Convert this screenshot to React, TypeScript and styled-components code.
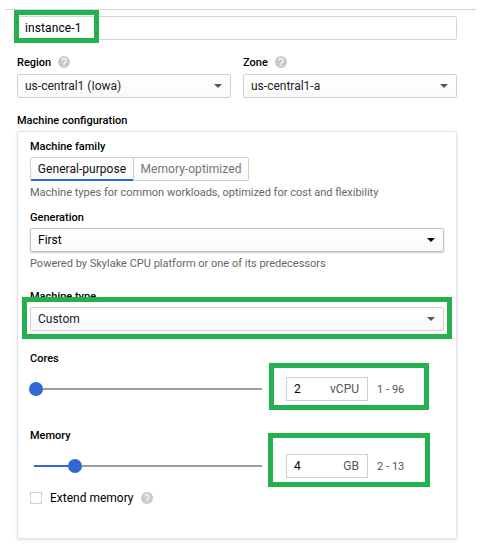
import React from 'react';
import styled, { createGlobalStyle } from 'styled-components';

const GlobalStyle = createGlobalStyle`
  * { box-sizing: border-box; }
  body {
    margin: 0;
    background: #fff;
    color: #000;
    font-family: Roboto, "Liberation Sans", sans-serif;
    font-size: 12px;
  }
  input, button { font: inherit; color: inherit; }
`;

const Page = styled.main`
  width: 481px;
  height: 553px;
  padding: 9px 5px 0;
  overflow: hidden;
`;

const Form = styled.form`
  display: flex;
  flex-direction: column;
  border-top: 1px solid #d4d4d4;
  padding: 6px 19px 0 12px;
`;

const Highlighted = styled.div`
  position: relative;
`;

const Highlight = styled.div<{ $top: number; $left: number; $width: number; $height: number }>`
  position: absolute;
  z-index: 2;
  top: ${p => p.$top}px;
  left: ${p => p.$left}px;
  width: ${p => p.$width}px;
  height: ${p => p.$height}px;
  border: 5px solid #22b14c;
  pointer-events: none;
`;

const NameInput = styled.input`
  display: block;
  width: 100%;
  height: 24px;
  padding: 0 7px;
  border: 1px solid #d4d4d4;
  border-radius: 2px;
  letter-spacing: 0.1px;
  outline: 0;
`;

const LocationRow = styled.div`
  display: grid;
  grid-template-columns: 214px 214px;
  gap: 12px;
  margin-top: 14px;
`;

const Label = styled.div<{ $top?: number; $gap?: number }>`
  display: flex;
  align-items: center;
  gap: 7px;
  height: 16px;
  margin: ${p => p.$top ?? 0}px 0 ${p => p.$gap ?? 4}px;
  font-size: 11px;
  font-weight: 500;
  line-height: 16px;
`;

const LabelText = styled.span`
  padding-top: 2px;
`;

const SelectBox = styled.div<{ $active?: boolean }>`
  display: flex;
  align-items: center;
  justify-content: space-between;
  height: 24px;
  padding: 0 8px 0 7px;
  border: 1px solid ${p => (p.$active ? '#c0c0c0' : '#d0d0d0')};
  border-radius: 2px;
  background: linear-gradient(#fff, #f9f9f9);
  box-shadow: ${p => (p.$active ? '0 1px 2px rgba(0,0,0,.2)' : 'none')};
  color: ${p => (p.$active ? '#000' : '#222')};
  line-height: 16px;
`;

const Arrow = styled.svg<{ $dark?: boolean }>`
  width: 8px;
  height: 4px;
  fill: ${p => (p.$dark ? '#000' : '#555')};
`;

const HelpSvg = styled.svg`
  width: 12px;
  height: 12px;
  flex: none;
`;

const Card = styled.section`
  height: 408px;
  padding: 6px 12px 0;
  border: 1px solid #e5e5e5;
  border-radius: 2px;
  box-shadow: 0 1px 3px rgba(0, 0, 0, 0.12);
`;

const Segments = styled.div`
  display: flex;
  height: 24px;
`;

const Segment = styled.button<{ $selected?: boolean }>`
  width: ${p => (p.$selected ? 104 : 116)}px;
  height: 24px;
  margin: 0 0 0 ${p => (p.$selected ? 0 : -1)}px;
  padding: 0 0 ${p => (p.$selected ? 0 : 1)}px;
  border: 1px solid #d0d0d0;
  border-bottom: ${p => (p.$selected ? '2px solid #3367d6' : '1px solid #d0d0d0')};
  border-radius: ${p => (p.$selected ? '2px 0 0 2px' : '0 2px 2px 0')};
  background: linear-gradient(#fff, #f9f9f9);
  color: ${p => (p.$selected ? '#111' : '#757575')};
  line-height: 16px;
  letter-spacing: 0.04px;
  white-space: nowrap;
`;

const Hint = styled.p`
  height: 16px;
  margin: 3px 0 0;
  padding-top: 1px;
  color: #666;
  font-size: 11px;
  line-height: 16px;
`;

const SliderRow = styled.div`
  position: relative;
  display: flex;
  align-items: center;
  height: 24px;
`;

const Track = styled.div`
  position: relative;
  width: 228px;
  height: 2px;
  margin: 0 24px 0 4px;
  background: #9e9e9e;
`;

const Fill = styled.div<{ $value: number }>`
  width: ${p => p.$value}px;
  height: 2px;
  background: #3367d6;
`;

const Thumb = styled.div<{ $value: number }>`
  position: absolute;
  top: -6px;
  left: ${p => p.$value - 7}px;
  width: 14px;
  height: 14px;
  border-radius: 50%;
  background: #3367d6;
`;

const Amount = styled.div`
  display: flex;
  align-items: center;
  justify-content: space-between;
  width: 82px;
  height: 24px;
  padding: 0 8px 0 7px;
  border: 1px solid #d0d0d0;
`;

const Unit = styled.span`
  color: #555;
`;

const Range = styled.span`
  margin-left: 9px;
  color: #555;
  font-size: 11px;
  letter-spacing: 0.05px;
`;

const CheckRow = styled.label`
  display: flex;
  align-items: center;
  height: 16px;
  margin-top: 12px;
`;

const Checkbox = styled.input`
  appearance: none;
  width: 12px;
  height: 12px;
  margin: 0 8px 0 0;
  border: 1px solid #cfcfcf;
`;

const CheckText = styled.span`
  margin-right: 7px;
`;

function Help() {
  return (
    <HelpSvg viewBox="0 0 24 24">
      <circle cx="12" cy="12" r="12" fill="#cacaca" />
      <path d="M8 9a4 4 0 1 1 6.8 2.9C13.2 13.2 12 13.8 12 16" fill="none" stroke="#fff" strokeWidth="2.4" />
      <path d="M10.8 17.6h2.4V20h-2.4z" fill="#fff" />
    </HelpSvg>
  );
}

function Select({ value, active }: { value: string; active?: boolean }) {
  return (
    <SelectBox $active={active}>
      <span>{value}</span>
      <Arrow $dark={active} viewBox="0 0 8 4"><path d="M0 0h8L4 4z" /></Arrow>
    </SelectBox>
  );
}

interface FieldLabelProps {
  text: string;
  top?: number;
  gap?: number;
  help?: boolean;
}

function FieldLabel({ text, top, gap, help }: FieldLabelProps) {
  return (
    <Label $top={top} $gap={gap}>
      <LabelText>{text}</LabelText>
      {help && <Help />}
    </Label>
  );
}

interface SliderProps {
  position: number;
  amount: number;
  unit: string;
  range: string;
  children: React.ReactNode;
}

function Slider({ position, amount, unit, range, children }: SliderProps) {
  return (
    <SliderRow>
      <Track>
        <Fill $value={position} />
        <Thumb $value={position} />
      </Track>
      <Amount><span>{amount}</span><Unit>{unit}</Unit></Amount>
      <Range>{range}</Range>
      {children}
    </SliderRow>
  );
}

export default function App() {
  return (
    <>
      <GlobalStyle />
      <Page>
        <Form>
          <Highlighted>
            <NameInput defaultValue="instance-1" aria-label="Name" />
            <Highlight $top={-6} $left={-3} $width={85} $height={33} />
          </Highlighted>
          <LocationRow>
            <div>
              <FieldLabel text="Region" help />
              <Select value="us-central1 (Iowa)" />
            </div>
            <div>
              <FieldLabel text="Zone" help />
              <Select value="us-central1-a" />
            </div>
          </LocationRow>
          <FieldLabel text="Machine configuration" top={14} gap={3} />
          <Card>
            <FieldLabel text="Machine family" gap={3} />
            <Segments>
              <Segment type="button" $selected>General-purpose</Segment>
              <Segment type="button">Memory-optimized</Segment>
            </Segments>
            <Hint>Machine types for common workloads, optimized for cost and flexibility</Hint>
            <FieldLabel text="Generation" top={9} gap={3} />
            <Select value="First" active />
            <Hint>Powered by Skylake CPU platform or one of its predecessors</Hint>
            <FieldLabel text="Machine type" top={17} gap={3} />
            <Highlighted>
              <Select value="Custom" />
              <Highlight $top={-10} $left={-8} $width={430} $height={42} />
            </Highlighted>
            <FieldLabel text="Cores" top={19} gap={11} />
            <Slider position={2} amount={2} unit="vCPU" range="1 - 96">
              <Highlight $top={-14} $left={239} $width={160} $height={47} />
            </Slider>
            <FieldLabel text="Memory" top={26} gap={11} />
            <Slider position={41} amount={4} unit="GB" range="2 - 13">
              <Highlight $top={-21} $left={238} $width={162} $height={54} />
            </Slider>
            <CheckRow>
              <Checkbox type="checkbox" />
              <CheckText>Extend memory</CheckText>
              <Help />
            </CheckRow>
          </Card>
        </Form>
      </Page>
    </>
  );
}
